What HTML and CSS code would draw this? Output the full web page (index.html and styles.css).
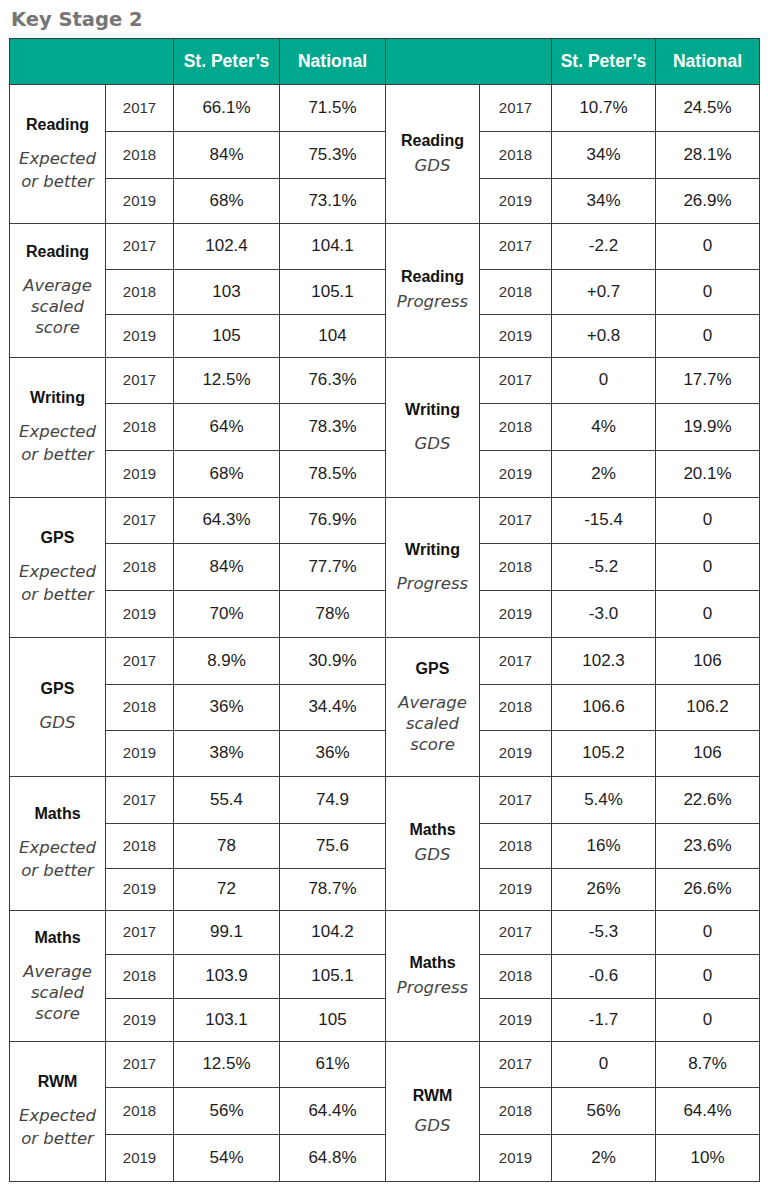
FILE: index.html
```html
<!DOCTYPE html>
<html lang="en">
<head>
<meta charset="utf-8">
<title>Key Stage 2</title>
<link rel="stylesheet" href="styles.css">
</head>
<body>
<div class="page">
  <h1 class="title">Key Stage 2</h1>
  <table class="ks2">
    <colgroup>
      <col class="c-lbl"><col class="c-yr"><col class="c-val"><col class="c-val">
      <col class="c-lbl2"><col class="c-yr2"><col class="c-val2"><col class="c-val2">
    </colgroup>
    <thead>
      <tr class="head">
        <th colspan="2"></th><th>St. Peter’s</th><th>National</th>
        <th colspan="2"></th><th>St. Peter’s</th><th>National</th>
      </tr>
    </thead>
    <tbody>
      <!-- group 1 -->
      <tr class="r47">
        <td rowspan="3" class="lbl"><span class="subj">Reading</span><span class="desc">Expected or better</span></td>
        <td class="yr">2017</td><td class="v">66.1%</td><td class="v">71.5%</td>
        <td rowspan="3" class="lbl"><span class="subj">Reading</span><span class="desc tight">GDS</span></td>
        <td class="yr">2017</td><td class="v">10.7%</td><td class="v">24.5%</td>
      </tr>
      <tr class="r47"><td class="yr">2018</td><td class="v">84%</td><td class="v">75.3%</td><td class="yr">2018</td><td class="v">34%</td><td class="v">28.1%</td></tr>
      <tr class="r45"><td class="yr">2019</td><td class="v">68%</td><td class="v">73.1%</td><td class="yr">2019</td><td class="v">34%</td><td class="v">26.9%</td></tr>
      <!-- group 2 -->
      <tr class="r46">
        <td rowspan="3" class="lbl"><span class="subj">Reading</span><span class="desc lh21">Average scaled score</span></td>
        <td class="yr">2017</td><td class="v">102.4</td><td class="v">104.1</td>
        <td rowspan="3" class="lbl"><span class="subj">Reading</span><span class="desc tight">Progress</span></td>
        <td class="yr">2017</td><td class="v">-2.2</td><td class="v">0</td>
      </tr>
      <tr class="r45"><td class="yr">2018</td><td class="v">103</td><td class="v">105.1</td><td class="yr">2018</td><td class="v">+0.7</td><td class="v">0</td></tr>
      <tr class="r43"><td class="yr">2019</td><td class="v">105</td><td class="v">104</td><td class="yr">2019</td><td class="v">+0.8</td><td class="v">0</td></tr>
      <!-- group 3 -->
      <tr class="r46">
        <td rowspan="3" class="lbl"><span class="subj">Writing</span><span class="desc">Expected or better</span></td>
        <td class="yr">2017</td><td class="v">12.5%</td><td class="v">76.3%</td>
        <td rowspan="3" class="lbl"><span class="subj">Writing</span><span class="desc">GDS</span></td>
        <td class="yr">2017</td><td class="v">0</td><td class="v">17.7%</td>
      </tr>
      <tr class="r47"><td class="yr">2018</td><td class="v">64%</td><td class="v">78.3%</td><td class="yr">2018</td><td class="v">4%</td><td class="v">19.9%</td></tr>
      <tr class="r47"><td class="yr">2019</td><td class="v">68%</td><td class="v">78.5%</td><td class="yr">2019</td><td class="v">2%</td><td class="v">20.1%</td></tr>
      <!-- group 4 -->
      <tr class="r46">
        <td rowspan="3" class="lbl"><span class="subj">GPS</span><span class="desc">Expected or better</span></td>
        <td class="yr">2017</td><td class="v">64.3%</td><td class="v">76.9%</td>
        <td rowspan="3" class="lbl"><span class="subj">Writing</span><span class="desc">Progress</span></td>
        <td class="yr">2017</td><td class="v">-15.4</td><td class="v">0</td>
      </tr>
      <tr class="r47"><td class="yr">2018</td><td class="v">84%</td><td class="v">77.7%</td><td class="yr">2018</td><td class="v">-5.2</td><td class="v">0</td></tr>
      <tr class="r47"><td class="yr">2019</td><td class="v">70%</td><td class="v">78%</td><td class="yr">2019</td><td class="v">-3.0</td><td class="v">0</td></tr>
      <!-- group 5 -->
      <tr class="r47">
        <td rowspan="3" class="lbl"><span class="subj">GPS</span><span class="desc">GDS</span></td>
        <td class="yr">2017</td><td class="v">8.9%</td><td class="v">30.9%</td>
        <td rowspan="3" class="lbl"><span class="subj">GPS</span><span class="desc lh21">Average scaled score</span></td>
        <td class="yr">2017</td><td class="v">102.3</td><td class="v">106</td>
      </tr>
      <tr class="r46"><td class="yr">2018</td><td class="v">36%</td><td class="v">34.4%</td><td class="yr">2018</td><td class="v">106.6</td><td class="v">106.2</td></tr>
      <tr class="r46"><td class="yr">2019</td><td class="v">38%</td><td class="v">36%</td><td class="yr">2019</td><td class="v">105.2</td><td class="v">106</td></tr>
      <!-- group 6 -->
      <tr class="r47">
        <td rowspan="3" class="lbl"><span class="subj">Maths</span><span class="desc">Expected or better</span></td>
        <td class="yr">2017</td><td class="v">55.4</td><td class="v">74.9</td>
        <td rowspan="3" class="lbl"><span class="subj">Maths</span><span class="desc tight">GDS</span></td>
        <td class="yr">2017</td><td class="v">5.4%</td><td class="v">22.6%</td>
      </tr>
      <tr class="r45"><td class="yr">2018</td><td class="v">78</td><td class="v">75.6</td><td class="yr">2018</td><td class="v">16%</td><td class="v">23.6%</td></tr>
      <tr class="r42"><td class="yr">2019</td><td class="v">72</td><td class="v">78.7%</td><td class="yr">2019</td><td class="v">26%</td><td class="v">26.6%</td></tr>
      <!-- group 7 -->
      <tr class="r44">
        <td rowspan="3" class="lbl"><span class="subj">Maths</span><span class="desc lh21">Average scaled score</span></td>
        <td class="yr">2017</td><td class="v">99.1</td><td class="v">104.2</td>
        <td rowspan="3" class="lbl"><span class="subj">Maths</span><span class="desc tight">Progress</span></td>
        <td class="yr">2017</td><td class="v">-5.3</td><td class="v">0</td>
      </tr>
      <tr class="r44"><td class="yr">2018</td><td class="v">103.9</td><td class="v">105.1</td><td class="yr">2018</td><td class="v">-0.6</td><td class="v">0</td></tr>
      <tr class="r43"><td class="yr">2019</td><td class="v">103.1</td><td class="v">105</td><td class="yr">2019</td><td class="v">-1.7</td><td class="v">0</td></tr>
      <!-- group 8 -->
      <tr class="r46">
        <td rowspan="3" class="lbl"><span class="subj">RWM</span><span class="desc">Expected or better</span></td>
        <td class="yr">2017</td><td class="v">12.5%</td><td class="v">61%</td>
        <td rowspan="3" class="lbl"><span class="subj">RWM</span><span class="desc mid">GDS</span></td>
        <td class="yr">2017</td><td class="v">0</td><td class="v">8.7%</td>
      </tr>
      <tr class="r47"><td class="yr">2018</td><td class="v">56%</td><td class="v">64.4%</td><td class="yr">2018</td><td class="v">56%</td><td class="v">64.4%</td></tr>
      <tr class="r47"><td class="yr">2019</td><td class="v">54%</td><td class="v">64.8%</td><td class="yr">2019</td><td class="v">2%</td><td class="v">10%</td></tr>
    </tbody>
  </table>
</div>
</body>
</html>
```

FILE: styles.css
```css
html, body {
  margin: 0;
  padding: 0;
  background: #ffffff;
}

.page {
  padding: 0 8px 0 9px;
}

.title {
  font-family: "DejaVu Sans", sans-serif;
  font-weight: bold;
  font-size: 19.5px;
  line-height: 24px;
  color: #767676;
  margin: 0 0 6px 0;
  padding: 7.5px 0 0 2px;
}

.ks2 {
  border-collapse: collapse;
  table-layout: fixed;
  width: 751px;
  box-shadow: 0 1px 0 #9a9a9a;
}

.c-lbl { width: 96px; }
.c-yr { width: 68px; }
.c-val { width: 106px; }
.c-lbl2 { width: 94px; }
.c-yr2 { width: 72px; }
.c-val2 { width: 104px; }

.ks2 th,
.ks2 td {
  border: 1px solid #3c3c3c;
  padding: 0 4px;
  text-align: center;
  vertical-align: middle;
}

.head {
  height: 46px;
}

.head th {
  background: #00a88e;
  color: #ffffff;
  font-family: "Liberation Sans", Arial, sans-serif;
  font-weight: bold;
  font-size: 17.5px;
  line-height: 20px;
}

.r42 { height: 42px; }
.r43 { height: 43px; }
.r44 { height: 44px; }
.r45 { height: 45px; }
.r46 { height: 46px; }
.r47 { height: 47px; }

.yr {
  font-family: "Liberation Sans", Arial, sans-serif;
  font-size: 15px;
  color: #333333;
  line-height: 18px;
}

.v {
  font-family: "Liberation Sans", Arial, sans-serif;
  font-size: 17px;
  color: #1c1c1c;
  line-height: 20px;
  padding-top: 2px;
}

.lbl {
  padding: 0 4px;
}

.subj {
  display: block;
  font-family: "Liberation Sans", Arial, sans-serif;
  font-weight: bold;
  font-size: 16px;
  line-height: 20px;
  color: #111111;
}

.desc {
  display: block;
  margin-top: 12px;
  font-family: "DejaVu Sans", sans-serif;
  font-style: italic;
  font-size: 16.5px;
  line-height: 23px;
  color: #454545;
}

.desc.lh21 {
  line-height: 21px;
  margin-top: 13px;
}

.desc.tight {
  margin-top: 3px;
}

.desc.mid {
  margin-top: 8px;
}
```
